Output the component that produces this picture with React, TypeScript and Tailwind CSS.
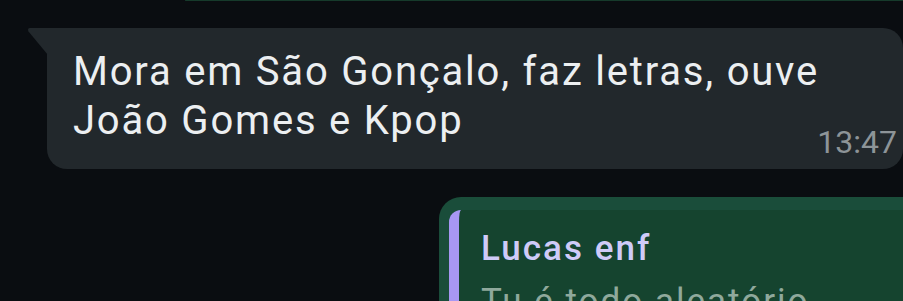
import { FC } from "react";

const font = { fontFamily: "Roboto, 'Noto Sans', sans-serif" };

const IncomingBubble: FC<{ text: string[]; time: string }> = ({ text, time }) => (
  <div className="relative ml-[47px] mt-[27px] w-[856px] rounded-b-[20px] rounded-tr-[20px] bg-[#22282c] pb-[11px] pl-[26px] pr-[6px] pt-[19px]">
    {/* tail */}
    <svg className="absolute -left-[20px] top-0" width="21" height="27" viewBox="0 0 21 27">
      <path d="M3 0 H21 V27 L1.5 3.5 Q0 0 3 0 Z" fill="#22282c" />
    </svg>
    <p className="text-[40px] leading-[49px] tracking-[1.8px] text-[#eceff1]">
      {text.map((line) => (
        <span key={line} className="block">
          {line}
        </span>
      ))}
    </p>
    <div className="-mt-[19.5px] flex justify-end text-[32px] leading-[32px] text-[#8d9498]">{time}</div>
  </div>
);

export default function App() {
  return (
    <div className="flex h-[301px] w-[903px] flex-col overflow-hidden bg-[#0a0d11]" style={font}>
      {/* end of previous outgoing message */}
      <div className="ml-[185px] h-[3px] rounded-bl-[6px] border-b border-[#163a2b] bg-[#1d4434]" />

      <IncomingBubble text={["Mora em São Gonçalo, faz letras, ouve", "João Gomes e Kpop"]} time="13:47" />

      <div className="ml-[439px] mt-[28px] flex-1 rounded-tl-[22px] bg-[#1a4d3a] pl-[10px] pt-[13px]">
        <div className="h-full rounded-tl-[12px] border-l-[10px] border-[#a797f3] bg-[#15442f] pl-[22px] pt-[17px]">
          <p className="text-[35px] font-medium leading-[44px] tracking-[2px] text-[#cfcbf8]">Lucas enf</p>
          <p className="mt-[9px] text-[35px] leading-[44px] tracking-[2px] text-[#8fa99c]">Tu é todo aleatório</p>
        </div>
      </div>
    </div>
  );
}
